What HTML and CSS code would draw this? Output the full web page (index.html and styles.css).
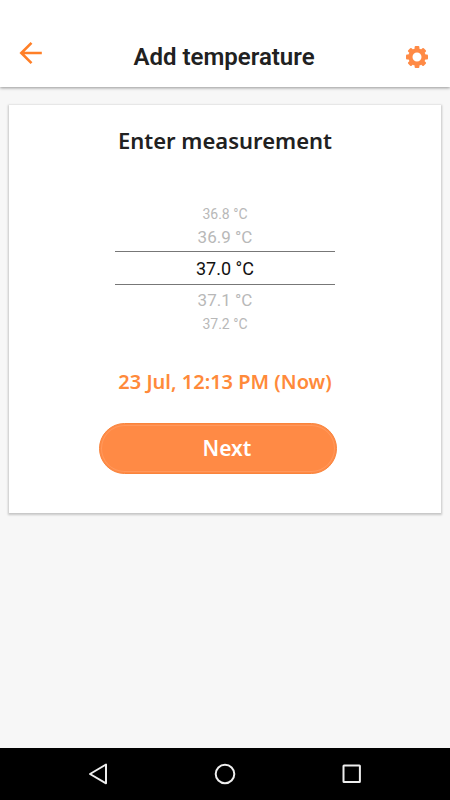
FILE: index.html
```html
<!DOCTYPE html>
<html lang="en">
<head>
<meta charset="utf-8">
<meta name="viewport" content="width=device-width, initial-scale=1">
<title>Add temperature</title>
<link rel="stylesheet" href="styles.css">
</head>
<body>
<header class="topbar">
  <button class="icon-button back" type="button" aria-label="Back">
    <svg width="24" height="24" viewBox="0 0 24 24" fill="none" stroke="currentColor" stroke-width="2.6"><path d="M12.5 1.8 2.3 12l10.2 10.2M2.6 12h20.2"/></svg>
  </button>
  <h1 class="title">Add temperature</h1>
  <button class="icon-button settings" type="button" aria-label="Settings">
    <svg width="24" height="24" viewBox="-12 -12 24 24" fill="currentColor">
      <circle r="6.6" fill="none" stroke="currentColor" stroke-width="4.2"/>
      <g id="teeth">
        <rect x="-2.4" y="-11" width="4.8" height="5" rx="1"/>
        <rect x="-2.4" y="-11" width="4.8" height="5" rx="1" transform="rotate(45)"/>
        <rect x="-2.4" y="-11" width="4.8" height="5" rx="1" transform="rotate(90)"/>
        <rect x="-2.4" y="-11" width="4.8" height="5" rx="1" transform="rotate(135)"/>
      </g>
      <use href="#teeth" transform="rotate(180)"/>
    </svg>
  </button>
</header>
<main class="content">
  <section class="card">
    <h2 class="heading">Enter measurement</h2>
    <div class="picker" role="listbox" aria-label="Temperature">
      <div class="option far" role="option">36.8 °C</div>
      <div class="option near" role="option">36.9 °C</div>
      <div class="option selected" role="option" aria-selected="true">37.0 °C</div>
      <div class="option near" role="option">37.1 °C</div>
      <div class="option far" role="option">37.2 °C</div>
    </div>
    <button class="date" type="button">23 Jul, 12:13 PM (Now)</button>
    <button class="next" type="button">Next</button>
  </section>
</main>
<nav class="navbar" aria-label="System">
  <button class="nav-button" type="button" aria-label="Back">
    <svg width="24" height="24" viewBox="0 0 24 24"><path d="M20 2.5v18.8L4 12z"/></svg>
  </button>
  <button class="nav-button" type="button" aria-label="Home">
    <svg width="24" height="24" viewBox="0 0 24 24"><circle cx="12" cy="12" r="9.3"/></svg>
  </button>
  <button class="nav-button" type="button" aria-label="Recent apps">
    <svg width="24" height="24" viewBox="0 0 24 24"><rect x="3.5" y="3.5" width="16.4" height="16.4" rx=".5"/></svg>
  </button>
</nav>
</body>
</html>
```

FILE: styles.css
```css
* { box-sizing: border-box; }

body {
  margin: 0;
  min-height: 100vh;
  display: flex;
  flex-direction: column;
  background: #f7f7f7;
  color: #212121;
  font-family: "Noto Sans", "Open Sans", sans-serif;
}

button {
  margin: 0;
  padding: 0;
  border: 0;
  background: none;
  font: inherit;
  cursor: pointer;
}

svg { display: block; }

.topbar {
  display: grid;
  grid-template-columns: 24px 1fr 24px;
  align-items: center;
  padding: 41px 21px 14px 19px;
  background: #fff;
  box-shadow: 0 1px 3px rgba(0, 0, 0, .4);
}

.title {
  margin: 0;
  font: 600 24px/32px Roboto, sans-serif;
  text-align: center;
}

.icon-button { color: #ff8a45; }

.back {
  align-self: start;
  color: #ff7f27;
}

.content {
  flex: 1;
  padding: 18px 9px;
}

.card {
  display: flex;
  flex-direction: column;
  align-items: center;
  padding: 19px 16px 39px;
  background: #fff;
  box-shadow: 0 1px 2px 1px rgba(0, 0, 0, .2);
}

.heading {
  margin: 0 0 48px;
  font-size: 22px;
  font-weight: 600;
  line-height: 32px;
}

.picker {
  width: 220px;
  font-family: Roboto, sans-serif;
  text-align: center;
}

.option {
  font-size: 18px;
  line-height: 27px;
  color: #b8b8b8;
}

.near { font-size: 17px; }

.far {
  font-size: 14px;
  line-height: 20px;
}

.selected {
  padding-top: 2px;
  border: solid #777;
  border-width: 1px 0;
  line-height: 30px;
  color: #111;
}

.selected + .near { padding-top: 2px; }

.date {
  margin-top: 32px;
  font-size: 20px;
  font-weight: 600;
  line-height: 32px;
  color: #ff8a3a;
}

.next {
  width: 238px;
  height: 51px;
  margin: 25px 14px 0 0;
  padding: 0 0 2px 18px;
  border: 1px solid #f9843c;
  border-radius: 26px;
  background: #ff8a45;
  box-shadow: inset 0 0 0 1px #ff8a45, inset 0 0 0 2px #ff985c;
  color: #fff;
  font-size: 21px;
  font-weight: 600;
}

.navbar {
  display: flex;
  justify-content: space-between;
  padding: 14px 86px;
  background: #000;
}

.nav-button svg {
  fill: none;
  stroke: #eee;
  stroke-width: 2;
  stroke-linejoin: round;
}
```
